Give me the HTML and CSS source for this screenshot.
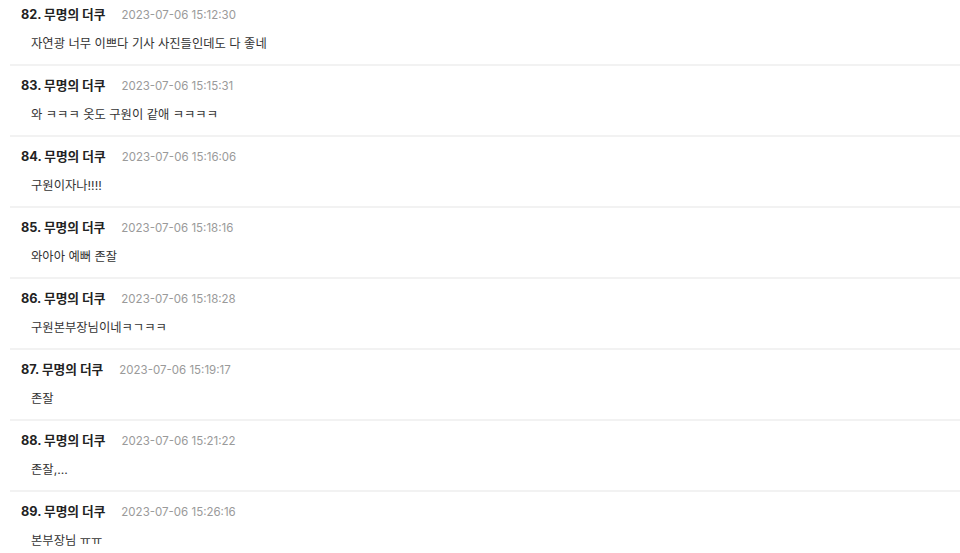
FILE: index.html
```html
<!DOCTYPE html>
<html lang="ko">
<head>
<meta charset="utf-8">
<link rel="stylesheet" href="styles.css">
</head>
<body>
<ul class="comments">
  <li class="comment">
    <div class="meta"><span class="author">82. 무명의 더쿠</span><span class="date">2023-07-06 15:12:30</span></div>
    <p class="text">자연광 너무 이쁘다 기사 사진들인데도 다 좋네</p>
  </li>
  <li class="comment">
    <div class="meta"><span class="author">83. 무명의 더쿠</span><span class="date">2023-07-06 15:15:31</span></div>
    <p class="text">와 ㅋㅋㅋ 옷도 구원이 같애 ㅋㅋㅋㅋ</p>
  </li>
  <li class="comment">
    <div class="meta"><span class="author">84. 무명의 더쿠</span><span class="date">2023-07-06 15:16:06</span></div>
    <p class="text">구원이자나!!!!</p>
  </li>
  <li class="comment">
    <div class="meta"><span class="author">85. 무명의 더쿠</span><span class="date">2023-07-06 15:18:16</span></div>
    <p class="text">와아아 예뻐 존잘</p>
  </li>
  <li class="comment">
    <div class="meta"><span class="author">86. 무명의 더쿠</span><span class="date">2023-07-06 15:18:28</span></div>
    <p class="text">구원본부장님이네ㅋㄱㅋㅋ</p>
  </li>
  <li class="comment">
    <div class="meta"><span class="author">87. 무명의 더쿠</span><span class="date">2023-07-06 15:19:17</span></div>
    <p class="text">존잘</p>
  </li>
  <li class="comment">
    <div class="meta"><span class="author">88. 무명의 더쿠</span><span class="date">2023-07-06 15:21:22</span></div>
    <p class="text">존잘,...</p>
  </li>
  <li class="comment">
    <div class="meta"><span class="author">89. 무명의 더쿠</span><span class="date">2023-07-06 15:26:16</span></div>
    <p class="text">본부장님 ㅠㅠ</p>
  </li>
</ul>
</body>
</html>
```
FILE: styles.css
```css
html, body {
  margin: 0;
  padding: 0;
  background: #ffffff;
}
body {
  font-family: Inter, "Noto Sans CJK KR", sans-serif;
  overflow: hidden;
}
.comments {
  list-style: none;
  margin: 0 0 0 10px;
  padding: 0;
}
.comment {
  padding: 10px 0 10px 11px;
  border-bottom: 2px solid #f2f2f2;
}
.comment:first-child {
  padding-top: 5px;
}
.meta {
  display: flex;
  align-items: center;
  gap: 16px;
  height: 20px;
  line-height: 20px;
}
.author {
  font-size: 12.7px;
  font-weight: 700;
  color: #222222;
}
.date {
  font-size: 11.5px;
  color: #9a9a9a;
}
.text {
  margin: 9px 0 0 10px;
  height: 20px;
  line-height: 20px;
  font-size: 12.3px;
  color: #333333;
}
```
